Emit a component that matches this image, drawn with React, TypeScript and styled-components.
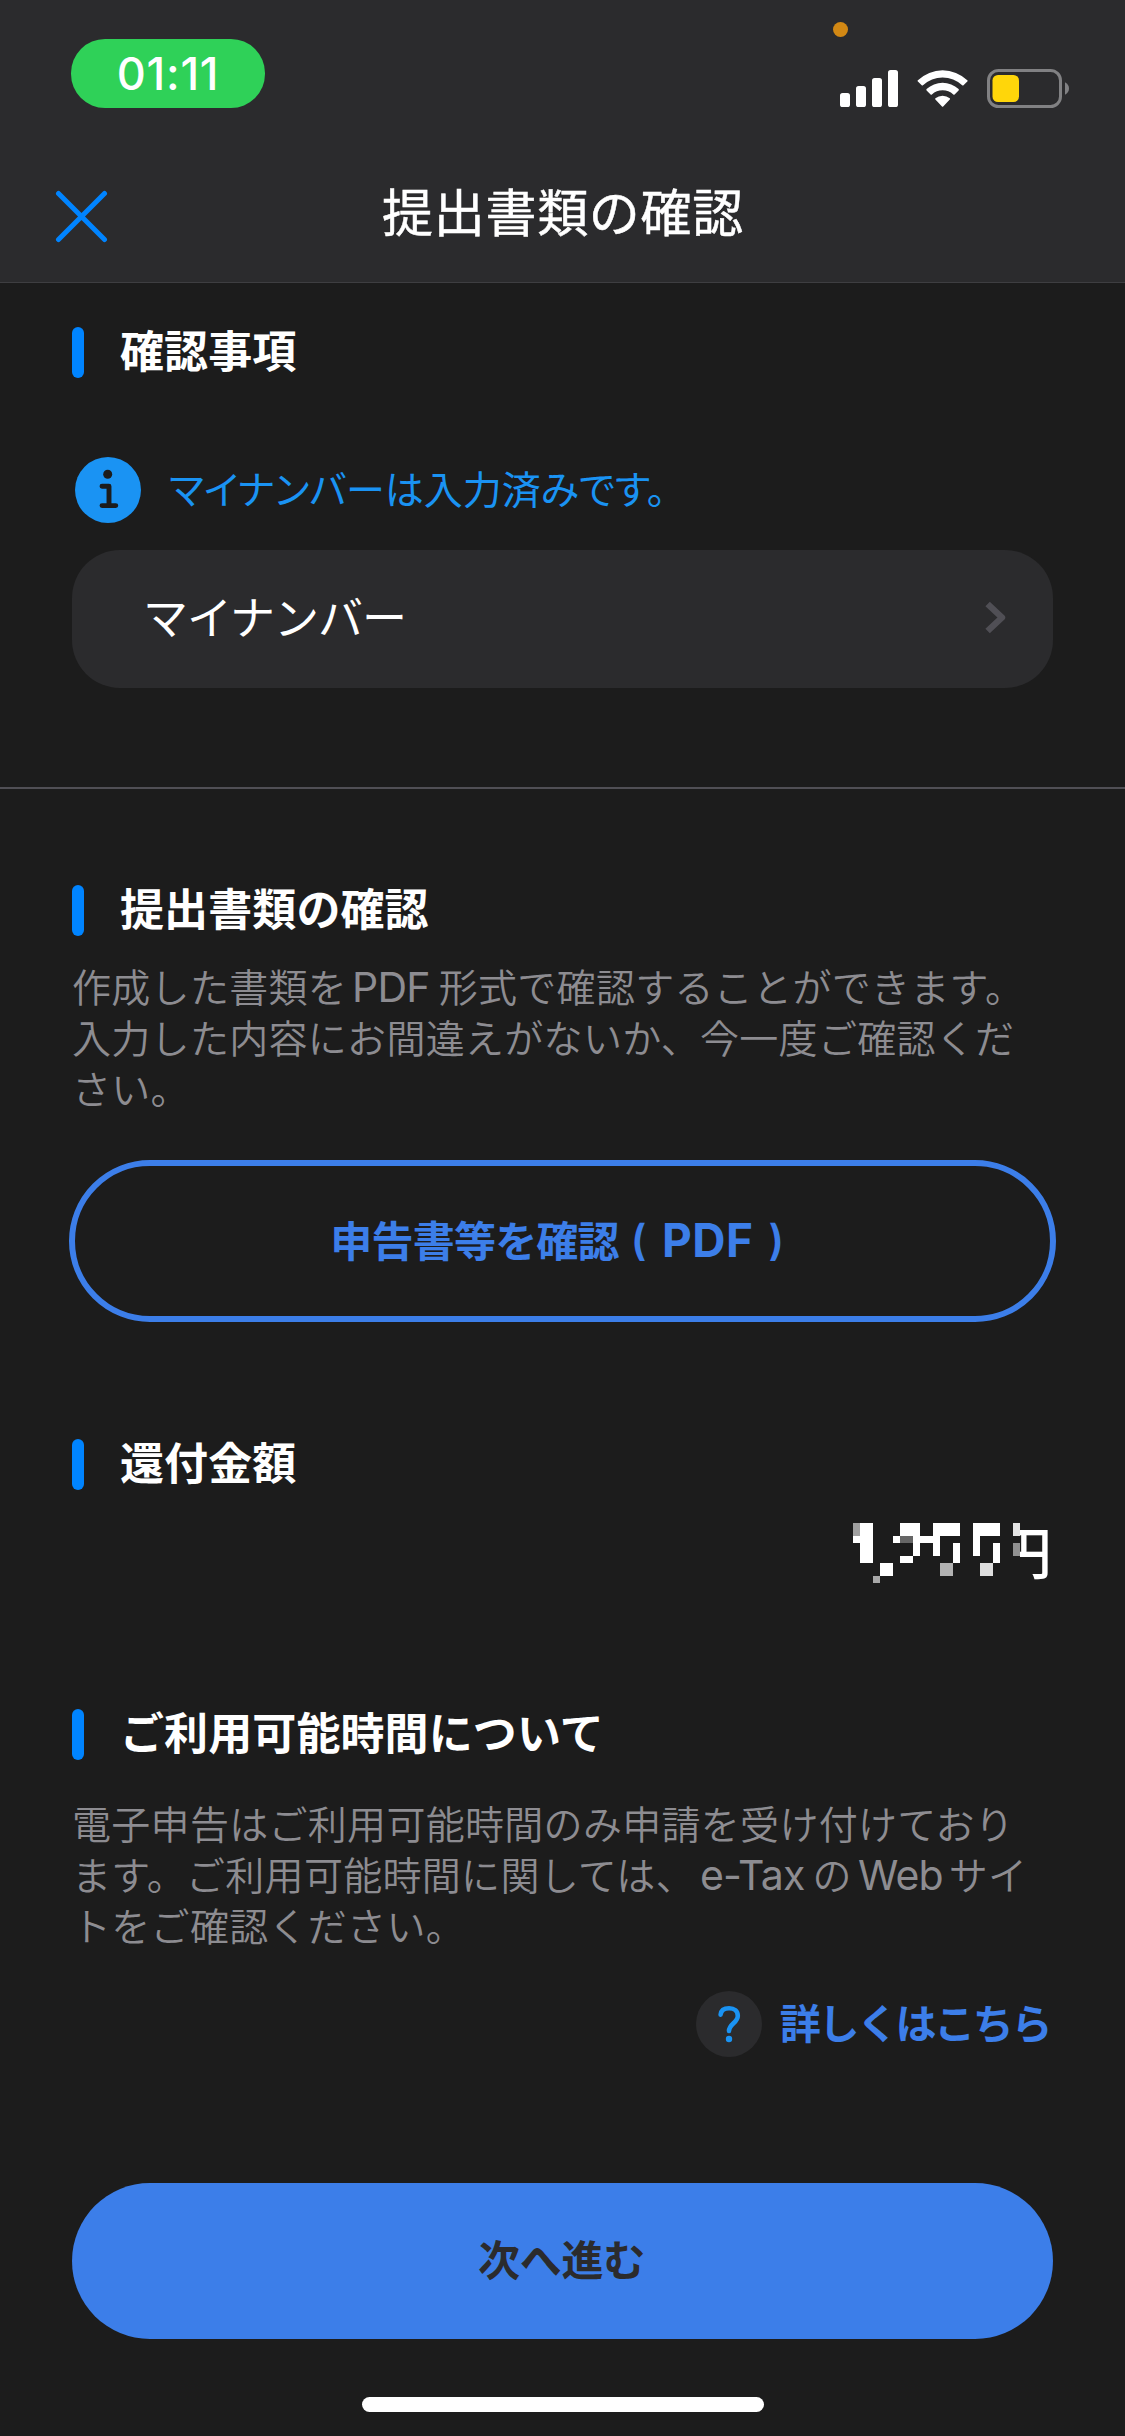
import React from "react";
import styled, { createGlobalStyle } from "styled-components";

const c = {
  bg: "#1c1c1c",
  panel: "#2b2b2d",
  accent: "#0084ff",
  info: "#1a93f3",
  action: "#3c7ee9",
  muted: "#8d8c91",
  line: "#504f55",
};

const GlobalStyle = createGlobalStyle`
  * { box-sizing: border-box; }
  body { margin: 0; background: ${c.bg}; }
  button { font: inherit; padding: 0; margin: 0; border: 0; background: none; cursor: pointer; }
  h1, h2, p { margin: 0; }
`;

const Screen = styled.div`
  width: 1125px;
  height: 2436px;
  display: flex;
  flex-direction: column;
  overflow: hidden;
  background: ${c.bg};
  color: #fff;
  font-family: "Noto Sans CJK JP", sans-serif;
`;

const Header = styled.header`
  height: 283px;
  flex: none;
  background: ${c.panel};
  border-bottom: 1px solid #3e3e41;
`;

const StatusBar = styled.div`
  position: relative;
  height: 132px;
  padding: 39px 56px 0 71px;
  display: flex;
  justify-content: space-between;
  align-items: flex-start;
`;

const TimePill = styled.div`
  width: 194px;
  height: 69px;
  border-radius: 34px;
  background: #2fd158;
  display: flex;
  align-items: center;
  justify-content: center;
  font: 500 45px/69px Inter, sans-serif;
  letter-spacing: 0.8px;
`;

const MicDot = styled.span`
  position: absolute;
  left: 833px;
  top: 22px;
  width: 15px;
  height: 15px;
  border-radius: 50%;
  background: #d28814;
`;

const StatusIcons = styled.svg`
  display: block;
  margin-top: 30px;
`;

const NavBar = styled.div`
  height: 150px;
  display: grid;
  grid-template-columns: 162px 1fr 162px;
  align-items: center;
`;

const CloseButton = styled.button`
  height: 60px;
  padding-left: 55px;
  padding-top: 19px;
  display: flex;
  align-items: center;
`;

const Title = styled.h1`
  font-size: 51px;
  line-height: 72px;
  font-weight: 400;
  letter-spacing: 0.7px;
  text-align: center;
  padding: 5px 0 0 1px;
  -webkit-text-stroke: 0.5px #fff;
`;

const Section = styled.section<{ $top: number }>`
  padding: ${(p) => p.$top}px 72px 0;
`;

const Heading = styled.h2`
  display: flex;
  align-items: flex-start;
  gap: 36px;
  height: 51px;
  font-size: 44px;
  line-height: 45px;
  font-weight: 700;
  letter-spacing: 0.1px;
  &::before {
    content: "";
    width: 12px;
    height: 51px;
    border-radius: 6px;
    background: ${c.accent};
  }
`;

const Notice = styled.div`
  margin: 79px 0 27px;
  padding-left: 3px;
  height: 66px;
  display: flex;
  align-items: center;
  gap: 28px;
  color: ${c.info};
  font-size: 39px;
  line-height: 60px;
  letter-spacing: 0;
  font-feature-settings: "palt";
  white-space: nowrap;
`;

const NoticeText = styled.span`
  padding-bottom: 7px;
`;

const ListRow = styled.button`
  width: 981px;
  height: 138px;
  border-radius: 48px;
  background: ${c.panel};
  color: #fff;
  padding: 0 46px 3px 71px;
  display: flex;
  align-items: center;
  justify-content: space-between;
  font-size: 45px;
  letter-spacing: -1px;
`;

const RowLabel = styled.span`
  padding-bottom: 4px;
`;

const Divider = styled.hr`
  width: 100%;
  flex: none;
  height: 2px;
  border: 0;
  margin: 99px 0 0;
  background: ${c.line};
`;

const Body = styled.p<{ $gap: number }>`
  margin-top: ${(p) => p.$gap}px;
  color: ${c.muted};
  font-size: 39px;
  line-height: 51px;
  letter-spacing: 0.3px;
  font-weight: 350;
  white-space: nowrap;
`;

const Latin = styled.span<{ $l?: number; $r?: number; $track?: number }>`
  font-family: Inter, sans-serif;
  font-size: 41px;
  line-height: 1;
  font-weight: 400;
  letter-spacing: ${(p) => p.$track ?? -0.8}px;
  margin: 0 ${(p) => p.$r ?? 9}px 0 ${(p) => p.$l ?? 6}px;
`;

const OutlineButton = styled.button`
  display: flex;
  align-items: center;
  justify-content: center;
  width: 987px;
  height: 162px;
  margin: 47px -3px 0;
  padding: 0 10px 5px 0;
  border: 6px solid ${c.action};
  border-radius: 81px;
  color: ${c.action};
  font-size: 42px;
  font-weight: 700;
  letter-spacing: -0.8px;
`;

const PdfTag = styled.span`
  display: flex;
  align-items: center;
  gap: 15px;
  margin-left: 12px;
  padding-top: 3px;
  font: 700 46px/60px Inter, sans-serif;
  letter-spacing: 0.5px;
`;

const Paren = styled.span`
  font-weight: 600;
  font-size: 42px;
`;

const AmountRow = styled.div`
  height: 90px;
  padding: 33px 1px 0 0;
  display: flex;
  justify-content: flex-end;
  align-items: flex-start;
`;

const MosaicArt = styled.svg`
  position: relative;
  z-index: 1;
  flex: none;
`;

const Yen = styled.span`
  margin-left: -24px;
  font-size: 56px;
  line-height: 54px;
  font-weight: 500;
`;

const HelpRow = styled.div`
  margin-top: 41px;
  height: 66px;
  padding-right: 3px;
  display: flex;
  justify-content: flex-end;
  align-items: center;
  gap: 18px;
`;

const HelpLink = styled.a`
  color: ${c.action};
  font-size: 41px;
  line-height: 60px;
  font-weight: 700;
  letter-spacing: -2.4px;
  padding-bottom: 6px;
  white-space: nowrap;
`;

const PrimaryButton = styled.button`
  width: 981px;
  height: 156px;
  margin-top: 126px;
  padding: 0 2px 7px 0;
  border-radius: 78px;
  background: ${c.action};
  color: ${c.panel};
  font-size: 42px;
  font-weight: 700;
  letter-spacing: -0.3px;
`;

const HomeIndicator = styled.div`
  width: 402px;
  height: 15px;
  flex: none;
  border-radius: 7.5px;
  background: #fff;
  margin: 58px auto 0 362px;
`;

/* [x, y, width, height, fill] of each mosaic block over the hidden amount */
const blocks: [number, number, number, number, string][] = [
  [0, 0, 7, 13, "#a0a0a0"],
  [7, 0, 13, 40, "#fff"],
  [0, 13, 7, 7, "#fff"],
  [27, 40, 13, 13, "#fff"],
  [20, 53, 7, 7, "#a8a8a8"],
  [47, 0, 20, 13, "#fff"],
  [40, 13, 7, 7, "#fff"],
  [47, 13, 13, 7, "#666"],
  [60, 13, 7, 20, "#fff"],
  [47, 33, 13, 7, "#fff"],
  [67, 13, 13, 7, "#fff"],
  [80, 0, 27, 13, "#fff"],
  [80, 13, 7, 20, "#fff"],
  [100, 20, 7, 20, "#fff"],
  [87, 40, 13, 13, "#b2b2b2"],
  [120, 0, 27, 13, "#fff"],
  [120, 13, 7, 20, "#fff"],
  [140, 20, 7, 20, "#fff"],
  [127, 40, 13, 13, "#dedede"],
  [160, 0, 7, 13, "#e4e4e4"],
  [160, 20, 7, 13, "#909090"],
];

const Mosaic = () => (
  <MosaicArt width="167" height="62" viewBox="0 0 167 62" shapeRendering="crispEdges">
    <rect width="167" height="62" fill={c.bg} />
    {blocks.map(([x, y, w, h, fill]) => (
      <rect key={`${x}-${y}`} x={x} y={y} width={w} height={h} fill={fill} />
    ))}
  </MosaicArt>
);

const Indicators = () => (
  <StatusIcons width="229" height="40" viewBox="840 69 229 40" fill="#fff">
    <rect x="840" y="93" width="10" height="14" rx="2.6" />
    <rect x="856" y="86" width="10" height="21" rx="2.6" />
    <rect x="872" y="78" width="10" height="29" rx="2.6" />
    <rect x="888" y="70" width="10" height="37" rx="2.6" />
    <path d="M917.9 80.2Q917.2 80.9 917.9 81.6L921.7 85.3Q922.3 85.9 923 85.3A28.5 28.5 0 0 1 962.2 85.3Q962.9 85.9 963.5 85.3L967.3 81.6Q968 80.9 967.3 80.2A35.8 35.8 0 0 0 917.9 80.2Z" />
    <path d="M926.6 89.1Q926 89.8 926.6 90.4L930.6 94.4Q931.2 95 931.9 94.4A16 16 0 0 1 953.3 94.4Q954 95 954.6 94.4L958.6 90.4Q959.2 89.8 958.6 89.1A23.4 23.4 0 0 0 926.6 89.1Z" />
    <path d="M935.4 98.3Q934.8 99 935.4 99.6L942 106.4Q942.6 107 943.2 106.4L949.8 99.6Q950.4 99 949.8 98.3A11.4 11.4 0 0 0 935.4 98.3Z" />
    <rect x="988.5" y="70.5" width="72" height="36" rx="10" fill="none" stroke="#818183" strokeWidth="3" />
    <rect x="992.5" y="75" width="26.5" height="27" rx="5.5" fill="#ffd60a" />
    <path d="M1065 82.3Q1069 84.5 1069 88.5T1065 94.7Z" fill="#818183" />
  </StatusIcons>
);

const InfoIcon = () => (
  <svg width="66" height="66" viewBox="0 0 66 66">
    <circle cx="33" cy="33" r="33" fill={c.info} />
    <circle cx="32.7" cy="17.3" r="4.5" fill={c.bg} />
    <path d="M27 29.3H34V48.6M27 48.6H40.8" fill="none" stroke={c.bg} strokeWidth="4.9" strokeLinecap="round" strokeLinejoin="round" />
  </svg>
);

const HelpIcon = () => (
  <svg width="66" height="66" viewBox="0 0 66 66">
    <circle cx="33" cy="33" r="33" fill={c.panel} />
    <path d="M24.6 23.6C25 19.4 28.2 17.2 33.1 17.2C38.4 17.2 41.8 20.3 41.8 24.9C41.8 31.6 33 33 33 40" fill="none" stroke={c.info} strokeWidth="4.6" strokeLinecap="round" />
    <circle cx="33" cy="48" r="3.2" fill={c.info} />
  </svg>
);

export default function App() {
  return (
    <>
      <GlobalStyle />
      <Screen lang="ja">
        <Header>
          <StatusBar>
            <TimePill>01:11</TimePill>
            <MicDot />
            <Indicators />
          </StatusBar>
          <NavBar>
            <CloseButton aria-label="閉じる">
              <svg width="53" height="53" viewBox="0 0 53 53" fill="none" stroke={c.accent} strokeWidth="5" strokeLinecap="round">
                <path d="M3.5 3.5 49.5 49.5M49.5 3.5 3.5 49.5" />
              </svg>
            </CloseButton>
            <Title>提出書類の確認</Title>
          </NavBar>
        </Header>

        <Section $top={44}>
          <Heading>確認事項</Heading>
          <Notice>
            <InfoIcon />
            <NoticeText>マイナンバーは入力済みです。</NoticeText>
          </Notice>
          <ListRow>
            <RowLabel>マイナンバー</RowLabel>
            <svg width="22" height="33" viewBox="0 0 22 33" fill="none" stroke={c.line} strokeWidth="6.4" strokeLinejoin="round">
              <path d="M2.6 3 17 16.5 2.6 30" />
            </svg>
          </ListRow>
        </Section>
        <Divider />

        <Section $top={96}>
          <Heading>提出書類の確認</Heading>
          <Body $gap={24}>
            作成した書類を<Latin $l={5}>PDF</Latin>形式で確認することができます。
            <br />
            入力した内容にお間違えがないか、今一度ご確認くだ
            <br />
            さい。
          </Body>
          <OutlineButton>
            申告書等を確認
            <PdfTag>
              <Paren>(</Paren>
              PDF
              <Paren>)</Paren>
            </PdfTag>
          </OutlineButton>
        </Section>

        <Section $top={117}>
          <Heading>還付金額</Heading>
          <AmountRow>
            <Mosaic />
            <Yen>円</Yen>
          </AmountRow>
        </Section>

        <Section $top={129}>
          <Heading>ご利用可能時間について</Heading>
          <Body $gap={37}>
            電子申告はご利用可能時間のみ申請を受け付けており
            <br />
            ます。ご利用可能時間に関しては、<Latin $l={5} $r={8}>e-Tax</Latin>の<Latin $r={6}>Web</Latin>サイ
            <br />
            トをご確認ください。
          </Body>
          <HelpRow>
            <HelpIcon />
            <HelpLink>詳しくはこちら</HelpLink>
          </HelpRow>
          <PrimaryButton>次へ進む</PrimaryButton>
        </Section>
        <HomeIndicator />
      </Screen>
    </>
  );
}
